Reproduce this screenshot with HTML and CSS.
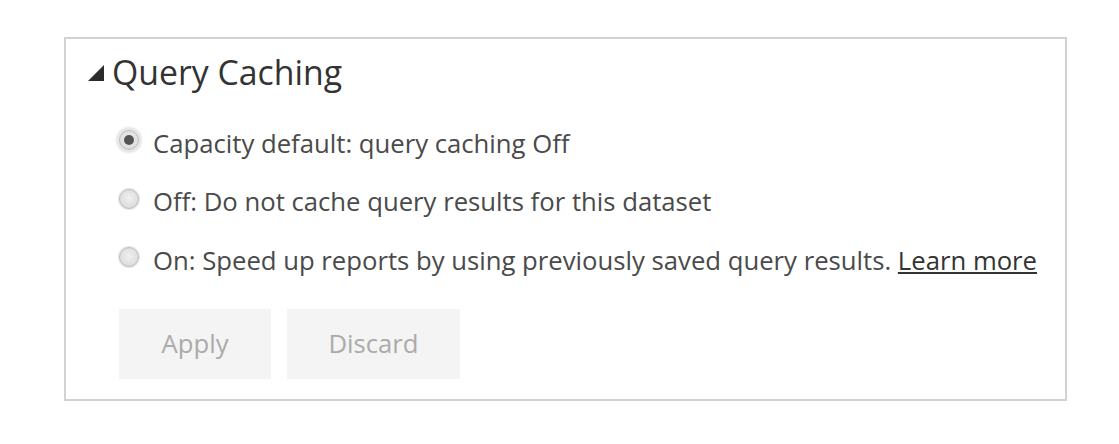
FILE: index.html
```html
<!DOCTYPE html>
<html lang="en">
<head>
    <meta charset="UTF-8">
    <meta name="viewport" content="width=device-width, initial-scale=1.0">
    <title>Query Caching</title>
    <link rel="stylesheet" href="styles.css">
</head>
<body>
    <section class="panel">
        <h2 class="panel-title">
            <span class="caret"></span>
            Query Caching
        </h2>
        <div class="options">
            <label class="option">
                <input type="radio" name="caching" checked>
                <span class="radio"></span>
                Capacity default: query caching Off
            </label>
            <label class="option">
                <input type="radio" name="caching">
                <span class="radio"></span>
                Off: Do not cache query results for this dataset
            </label>
            <label class="option">
                <input type="radio" name="caching">
                <span class="radio"></span>
                On: Speed up reports by using previously saved query results.&nbsp;<a href="#" class="learn-more">Learn more</a>
            </label>
        </div>
        <div class="actions">
            <button class="btn btn-apply" disabled>Apply</button>
            <button class="btn btn-discard" disabled>Discard</button>
        </div>
    </section>
</body>
</html>
```

FILE: styles.css
```css
body {
    font-family: "Open Sans", "Noto Sans", sans-serif;
    background-color: #ffffff;
    margin: 0;
    padding: 0;
}

.panel {
    box-sizing: border-box;
    width: 1003px;
    height: 364px;
    margin: 37px 0 0 64px;
    border: 2px solid #d2d2d2;
    padding: 11px 20px 0 20px;
}

.panel-title {
    display: flex;
    align-items: center;
    margin: 0;
    font-size: 33.8px;
    font-weight: 400;
    color: #333;
    line-height: 44px;
}

.caret {
    width: 0;
    height: 0;
    border-left: 16px solid transparent;
    border-bottom: 16px solid #2b2b2b;
    margin: 2px 8px 0 2px;
}

.options {
    display: flex;
    flex-direction: column;
    gap: 26.5px;
    margin-top: 33px;
    padding-left: 33px;
}

.option {
    display: flex;
    align-items: center;
    height: 32px;
    font-size: 25.7px;
    color: #4a4a4a;
    cursor: pointer;
}

.option input {
    display: none;
}

/* radio sits a little above the text's middle */
.radio {
    box-sizing: border-box;
    flex: none;
    width: 20px;
    height: 20px;
    margin: 0 14px 6px 0;
    border-radius: 50%;
    border: 1px solid #bcbcbc;
    background: radial-gradient(circle at 50% 45%, #f0f0f0 0%, #e0e0e0 60%, #cfcfcf 100%);
    box-shadow: 0 0 1px 1px #e6e6e6;
    display: flex;
    align-items: center;
    justify-content: center;
}

.option input:checked + .radio {
    box-shadow: 0 0 2px 3px #e6e6e6;
}

.option input:checked + .radio::after {
    content: "";
    width: 10px;
    height: 10px;
    border-radius: 50%;
    background-color: #555;
}

.learn-more {
    color: #333;
    text-decoration: underline;
}

.actions {
    display: flex;
    gap: 16px;
    padding-left: 33px;
    margin-top: 32.5px;
}

.btn {
    height: 70px;
    padding: 0;
    border: none;
    background-color: #f4f4f4;
    color: #ababab;
    font-family: inherit;
    font-size: 25.7px;
}

.btn-apply {
    width: 152px;
}

.btn-discard {
    width: 173px;
}
```
